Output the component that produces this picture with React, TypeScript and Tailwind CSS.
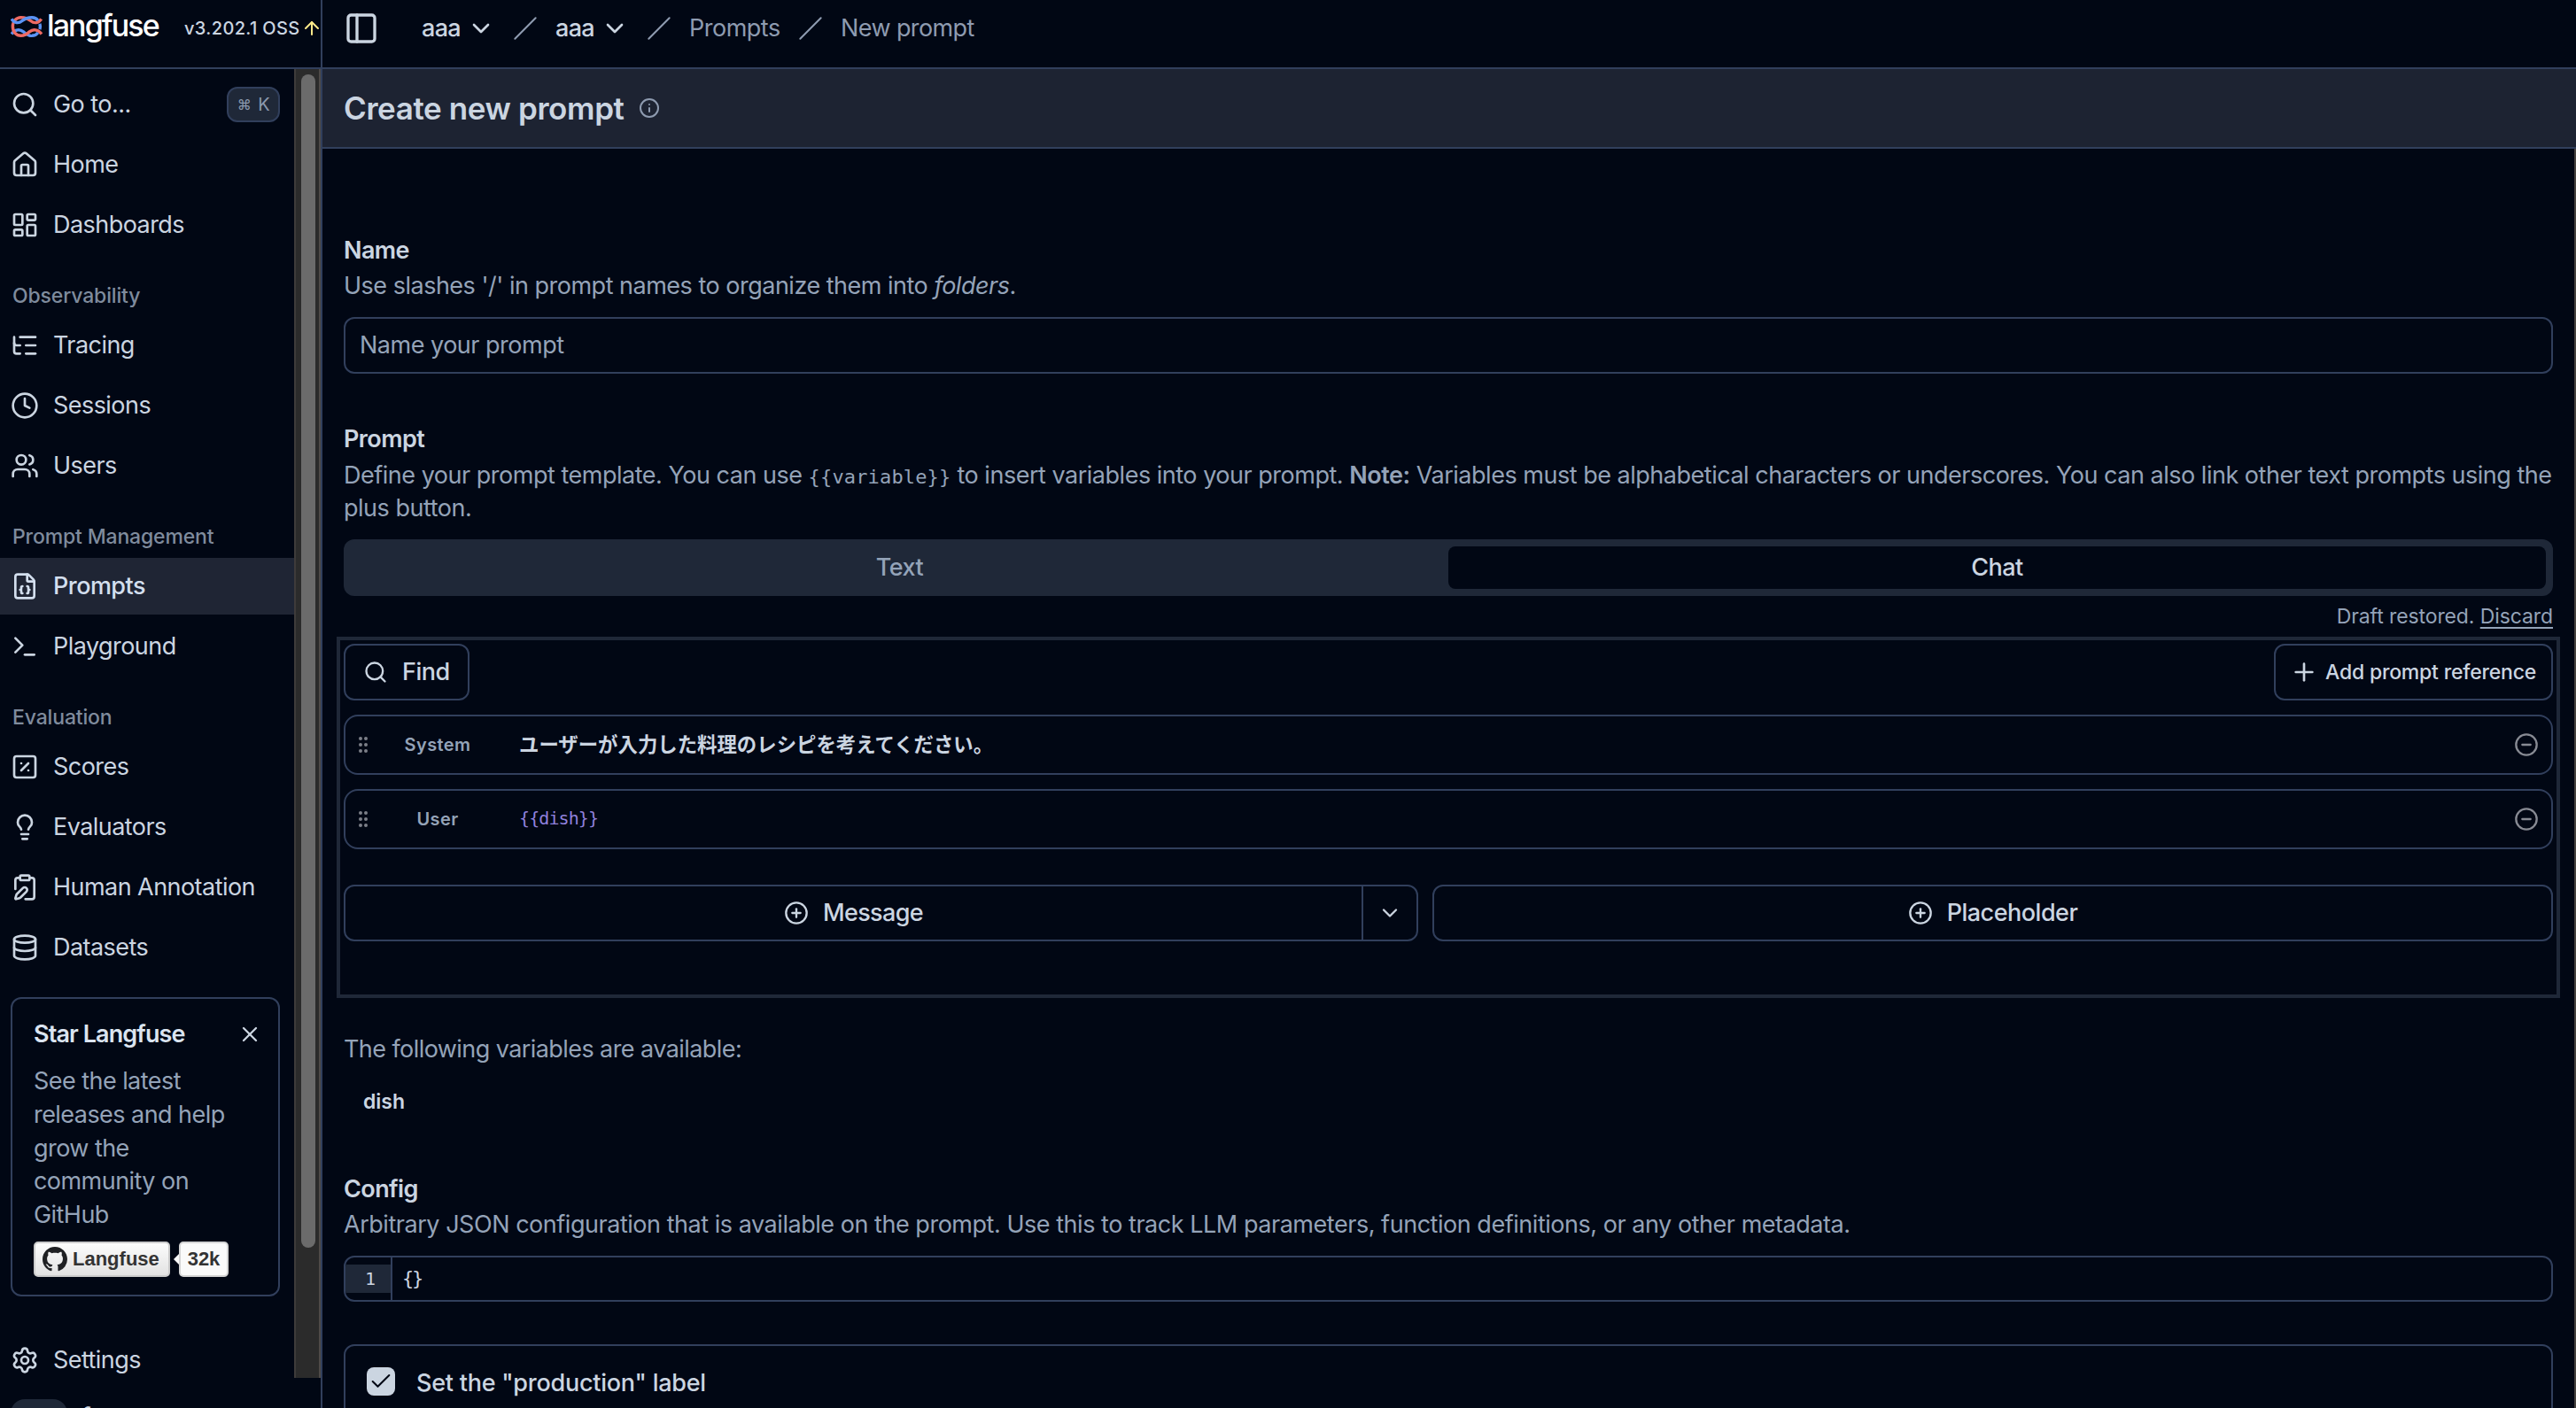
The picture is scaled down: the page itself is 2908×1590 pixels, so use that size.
import React from 'react';
import {
  ArrowUp,
  Check,
  ChevronDown,
  CirclePlus,
  CircleMinus,
  ClipboardPen,
  Clock,
  Database,
  FileBraces,
  GripVertical,
  House,
  Info,
  LayoutDashboard,
  Lightbulb,
  ListTree,
  PanelLeft,
  Plus,
  Search,
  Settings,
  Slash,
  SquarePercent,
  Terminal,
  Users,
  X,
  type LucideIcon,
} from 'lucide-react';

interface NavEntry {
  label: string;
  icon: LucideIcon;
  active?: boolean;
  shortcut?: string;
}

interface NavGroup {
  title?: string;
  items: NavEntry[];
}

const NAV_GROUPS: NavGroup[] = [
  {
    items: [
      { label: 'Go to...', icon: Search, shortcut: 'K' },
      { label: 'Home', icon: House },
      { label: 'Dashboards', icon: LayoutDashboard },
    ],
  },
  {
    title: 'Observability',
    items: [
      { label: 'Tracing', icon: ListTree },
      { label: 'Sessions', icon: Clock },
      { label: 'Users', icon: Users },
    ],
  },
  {
    title: 'Prompt Management',
    items: [
      { label: 'Prompts', icon: FileBraces, active: true },
      { label: 'Playground', icon: Terminal },
    ],
  },
  {
    title: 'Evaluation',
    items: [
      { label: 'Scores', icon: SquarePercent },
      { label: 'Evaluators', icon: Lightbulb },
      { label: 'Human Annotation', icon: ClipboardPen },
      { label: 'Datasets', icon: Database },
    ],
  },
];

const LangfuseMark = () => (
  <svg width="36" height="24" viewBox="0 0 105 70" fill="none" strokeWidth="10" className="shrink-0">
    <path d="M70 66C58 66 50 60 42 52C30 42 14 44 3 60" stroke="#5b93f5" />
    <path d="M101 10C92 24 78 26 66 16C55 7 44 5 34 5C18 5 7 18 7 35C7 52 18 65 34 65C46 65 54 60 62 52C74 42 90 44 102 60" stroke="#ee6a63" />
    <path d="M3 10C12 24 26 26 38 16C49 7 60 5 70 5C79 5 86 9 90 15" stroke="#5b93f5" />
    <path d="M96 26C98 32 98 38 96 44M90 55C86 61 79 65 70 65" stroke="#5b93f5" />
  </svg>
);

const GithubMark = () => (
  <svg width="28" height="28" viewBox="0 0 16 16" fill="#1f2023" className="shrink-0">
    <path d="M8 0C3.58 0 0 3.58 0 8c0 3.54 2.29 6.53 5.47 7.59.4.07.55-.17.55-.38 0-.19-.01-.82-.01-1.49-2.01.37-2.53-.49-2.69-.94-.09-.23-.48-.94-.82-1.13-.28-.15-.68-.52-.01-.53.63-.01 1.08.58 1.23.82.72 1.21 1.87.87 2.33.66.07-.52.28-.87.51-1.07-1.78-.2-3.64-.89-3.64-3.95 0-.87.31-1.59.82-2.15-.08-.2-.36-1.02.08-2.12 0 0 .67-.21 2.2.82.64-.18 1.32-.27 2-.27s1.36.09 2 .27c1.53-1.04 2.2-.82 2.2-.82.44 1.1.16 1.92.08 2.12.51.56.82 1.27.82 2.15 0 3.07-1.87 3.75-3.65 3.95.29.25.54.73.54 1.48 0 1.07-.01 1.93-.01 2.2 0 .21.15.46.55.38A8.01 8.01 0 0 0 16 8c0-4.42-3.58-8-8-8z" />
  </svg>
);

const NavItem = ({ entry }: { entry: NavEntry }) => {
  const Icon = entry.icon;
  return (
    <a
      className={`flex h-16 items-center gap-4 pl-3 pr-4 ${
        entry.active ? 'bg-[#1f2534] font-medium text-[#d3dfee]' : ''
      }`}
    >
      <Icon size={32} className="shrink-0" />
      <span className="grow whitespace-nowrap">{entry.label}</span>
      {entry.shortcut && (
        <kbd className="flex h-10 w-[60px] items-center justify-center gap-2 rounded-xl border-2 border-[#313f5c] bg-[#1f2838] font-[Inter,sans-serif] text-[20px] text-[#8b98ad]">
          <span className="text-[16px]">⌘</span>
          {entry.shortcut}
        </kbd>
      )}
    </a>
  );
};

const StarCard = () => (
  <div className="ml-3 mt-6 h-[338px] w-[304px] rounded-xl border-2 border-[#313f5c] pl-6 pr-4 pt-6">
    <div className="flex h-8 items-center justify-between pr-[2px]">
      <h3 className="font-semibold tracking-[-0.9px] text-[#dbe4f0]">Star Langfuse</h3>
      <X size={28} />
    </div>
    <p className="mt-[18px] w-[232px] leading-[37.8px] text-[#94a3b8]">
      See the latest releases and help grow the community on GitHub
    </p>
    <div className="mt-[11px] flex h-10 items-center font-['Liberation_Sans',Arial,sans-serif] text-[22px] font-bold tracking-normal text-[#333]">
      <div className="flex h-10 w-[154px] items-center gap-[6px] rounded-[5px] border-2 border-[#ccc] bg-linear-to-b from-[#fcfcfc] to-[#e2e2e2] pl-2">
        <GithubMark />
        Langfuse
      </div>
      <div className="ml-1 h-0 w-0 border-y-[6px] border-r-[6px] border-y-transparent border-r-[#fafafa]" />
      <div className="flex h-10 w-14 items-center justify-center rounded-[5px] border-2 border-[#d4d4d4] bg-[#fafafa]">
        32k
      </div>
    </div>
  </div>
);

const Sidebar = () => (
  <aside className="flex h-full w-[364px] shrink-0 flex-col border-r-2 border-[#313f5c]">
    <div className="flex h-[78px] shrink-0 border-b-2 border-[#313f5c]">
      <div className="flex h-[60px] items-center pl-3">
        <LangfuseMark />
        <span className="-mt-1 ml-[5px] w-[128px] text-[34px] font-medium tracking-[-1.9px] text-white">langfuse</span>
        <span className="ml-[27px] mt-1 w-[132px] whitespace-nowrap text-[20px] font-medium tracking-[0.35px]">
          v3.202.1 OSS
        </span>
        <ArrowUp size={24} className="mt-1 shrink-0 text-[#fde98a]" />
      </div>
    </div>
    <div className="flex min-h-0 grow overflow-hidden">
      <div className="w-[332px] shrink-0 text-[27px] tracking-[-0.55px]">
        {NAV_GROUPS.map((group, index) => (
          <div key={index} className={group.title ? 'mt-6' : 'mt-2'}>
            {group.title && (
              <div className="flex h-12 items-center pl-[14px] text-[23px] font-medium tracking-[-0.15px] text-[#7f8b9d]">
                {group.title}
              </div>
            )}
            <nav className="flex flex-col gap-1">
              {group.items.map((entry) => (
                <NavItem key={entry.label} entry={entry} />
              ))}
            </nav>
          </div>
        ))}
        <StarCard />
        <div className="mt-10">
          <NavItem entry={{ label: 'Settings', icon: Settings }} />
        </div>
        <div className="mt-3 flex gap-4 pl-3">
          <div className="h-16 w-16 rounded-2xl bg-[#1f2838]" />
          <span className="pt-1 font-semibold leading-8">f</span>
        </div>
      </div>
      <div className="h-[1478px] w-[30px] shrink-0 border-x-2 border-l-[#3e3b3a] border-r-[#4e4a48] bg-[#2b2b2b] pl-[6px] pt-[6px]">
        <div className="h-[1325px] w-4 rounded-full bg-[#6b6b6b]" />
      </div>
    </div>
  </aside>
);

const Breadcrumbs = () => (
  <header className="flex h-[78px] shrink-0 border-b-2 border-[#313f5c]">
    <div className="flex h-16 items-center pl-6 text-[27px] tracking-[-0.5px] text-[#8e9bb0]">
      <PanelLeft size={40} className="text-[#cbd5e1]" />
      {['org', 'project'].map((level) => (
        <div key={level} className="flex items-center">
          <div className={`flex items-center gap-2 font-medium text-[#cbd5e1] ${level === 'org' ? 'ml-12' : 'ml-px'}`}>
            <span className="w-[43px] tracking-[-0.7px]">aaa</span>
            <ChevronDown size={32} />
          </div>
          <Slash size={28} strokeWidth={1.75} className="ml-5 mr-[19px]" />
        </div>
      ))}
      <span className="ml-px w-[103px]">Prompts</span>
      <Slash size={28} strokeWidth={1.75} className="mx-5" />
      <span className="tracking-[-0.6px]">New prompt</span>
    </div>
  </header>
);

const FieldLabel = ({ children }: { children: React.ReactNode }) => (
  <h2 className="h-7 font-semibold leading-7 tracking-[-0.6px]">{children}</h2>
);

const MessageRow = ({ role, children }: { role: string; children: React.ReactNode }) => (
  <div className="mt-4 flex h-[68px] items-center rounded-2xl border-2 border-[#313f5c] pl-2 pr-[14px]">
    <GripVertical size={24} className="text-[#7c7f88]" />
    <span className="ml-6 w-24 text-center text-[20px] font-semibold tracking-[0.4px] text-[#94a3b8]">{role}</span>
    <div className="ml-11 flex grow">{children}</div>
    <CircleMinus size={28} className="text-[#878a93]" />
  </div>
);

const PromptEditor = () => (
  <div className="-mx-2 mt-[9px] h-[408px] border-4 border-[#1f2838] p-1">
    <div className="flex h-16 justify-between">
      <button className="flex w-[142px] items-center gap-4 rounded-xl border-2 border-[#313f5c] pl-5 font-medium">
        <Search size={28} />
        Find
      </button>
      <button className="flex w-[315px] items-center gap-2 rounded-xl border-2 border-[#313f5c] pl-4 text-[23px] font-medium tracking-[-0.2px]">
        <Plus size={32} />
        <span className="whitespace-nowrap">Add prompt reference</span>
      </button>
    </div>
    <MessageRow role="System">
      <span className="mb-[3px] font-['Noto_Sans_CJK_JP',sans-serif] text-[22.4px] font-bold tracking-normal">
        ユーザーが入力した料理のレシピを考えてください。
      </span>
    </MessageRow>
    <MessageRow role="User">
      <span className="mb-[2px] font-['DejaVu_Sans_Mono',monospace] text-[20px] tracking-[-0.9px] text-[#8f80dc]">
        {'{{dish}}'}
      </span>
    </MessageRow>
    <div className="mt-10 flex h-16 gap-4 font-medium">
      <div className="flex w-[1213px] rounded-xl border-2 border-[#313f5c]">
        <button className="flex grow items-center justify-center gap-4 tracking-[-0.65px]">
          <CirclePlus size={28} />
          Message
        </button>
        <button className="flex w-[62px] items-center justify-center border-l-2 border-[#313f5c]">
          <ChevronDown size={28} />
        </button>
      </div>
      <button className="flex grow items-center justify-center gap-4 rounded-xl border-2 border-[#313f5c]">
        <CirclePlus size={28} />
        Placeholder
      </button>
    </div>
  </div>
);

export default function App() {
  return (
    <div className="flex h-[1590px] w-[2908px] overflow-hidden bg-[#010714] font-[Inter,sans-serif] text-[#cbd5e1]">
      <Sidebar />
      <div className="flex min-w-0 grow flex-col">
        <Breadcrumbs />
        <div className="flex h-[90px] shrink-0 items-center gap-4 border-b-2 border-[#313f5c] bg-[#1d2332] pl-6">
          <h1 className="text-[35px] font-semibold tracking-[-0.4px]">Create new prompt</h1>
          <Info size={24} className="text-[#8e9bb0]" />
        </div>
        <main className="grow overflow-hidden border-r-2 border-[#45423f] px-6 text-[27px] tracking-[-0.5px]">
          <div className="mt-[101px]">
            <FieldLabel>Name</FieldLabel>
          </div>
          <p className="mt-[7px] leading-[37px] text-[#94a3b8]">
            Use slashes '/' in prompt names to organize them into <i>folders</i>.
          </p>
          <div className="mt-[17px] flex h-16 items-center rounded-xl border-2 border-[#313f5c] pl-4 text-[#94a3b8]">
            Name your prompt
          </div>

          <div className="mt-[60px]">
            <FieldLabel>Prompt</FieldLabel>
          </div>
          <p className="mt-[8px] h-[74px] whitespace-nowrap leading-[37px] tracking-[-0.485px] text-[#94a3b8]">
            Define your prompt template. You can use{' '}
            <code className="font-['DejaVu_Sans_Mono',monospace] text-[22px] leading-none tracking-[0.15px]">
              {'{{variable}}'}
            </code>{' '}
            to insert variables into your prompt. <b className="font-semibold">Note:</b> Variables must be
            alphabetical characters or underscores. You can also link other text prompts using the
            <br />
            plus button.
          </p>
          <div className="mt-[17px] grid h-16 grid-cols-2 rounded-xl bg-[#1f2838] p-2 font-medium">
            <div className="flex items-center justify-center text-[#94a3b8]">Text</div>
            <div className="flex items-center justify-center rounded-lg bg-[#010714]">Chat</div>
          </div>
          <div className="mt-[9px] h-7 text-right text-[23px] leading-7 tracking-[-0.1px] text-[#94a3b8]">
            Draft restored. <span className="underline underline-offset-4">Discard</span>
          </div>

          <PromptEditor />

          <p className="mt-[44px] h-7 leading-7 tracking-[-0.57px] text-[#94a3b8]">The following variables are available:</p>
          <div className="ml-[22px] mt-[31px] h-7 text-[23px] font-semibold leading-7 tracking-normal">dish</div>

          <div className="mt-[71px]">
            <FieldLabel>Config</FieldLabel>
          </div>
          <p className="mt-[7px] leading-[37px] tracking-[-0.465px] text-[#94a3b8]">
            Arbitrary JSON configuration that is available on the prompt. Use this to track LLM parameters, function
            definitions, or any other metadata.
          </p>
          <div className="mt-[17px] flex h-[52px] overflow-hidden rounded-xl border-2 border-[#313f5c] font-['DejaVu_Sans_Mono',monospace] text-[20px]">
            <div className="flex w-[53px] items-center border-r-2 border-[#313f5c]">
              <div className="flex h-8 w-full items-center bg-[#1f2838] pl-[22px]">1</div>
            </div>
            <div className="flex items-center pb-px pl-[11px] text-[22px] tracking-[-2.2px]">{'{}'}</div>
          </div>

          <div className="mt-12 flex h-[120px] gap-6 rounded-xl border-2 border-[#313f5c] pl-6 pt-6">
            <div className="flex h-8 w-8 items-center justify-center rounded-lg bg-[#cbd5e1] text-[#010714]">
              <Check size={28} strokeWidth={1.75} />
            </div>
            <span className="pt-[2px] font-medium leading-8 tracking-[-0.25px]">Set the "production" label</span>
          </div>
        </main>
      </div>
    </div>
  );
}
